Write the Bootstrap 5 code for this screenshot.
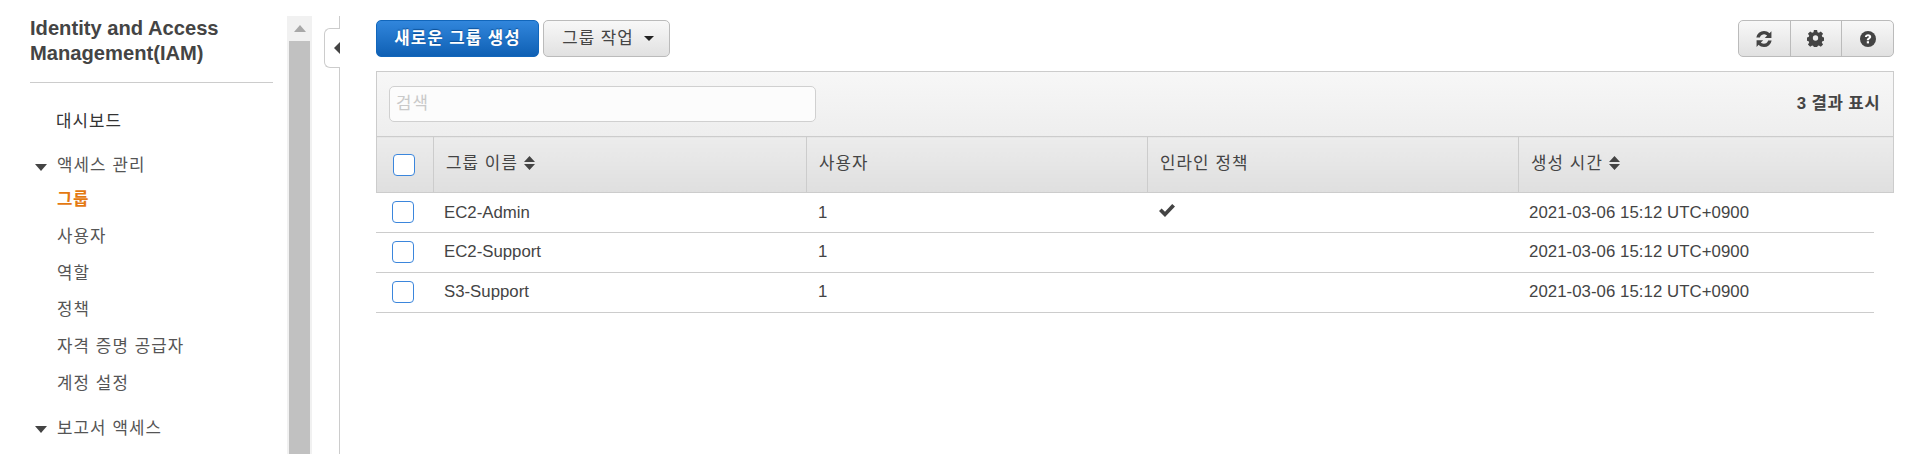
<!DOCTYPE html>
<html lang="ko">
<head>
<meta charset="UTF-8">
<meta name="viewport" content="width=device-width, initial-scale=1">
<title>IAM - 그룹</title>
<link href="https://cdn.jsdelivr.net/npm/bootstrap@5.3.2/dist/css/bootstrap.min.css" rel="stylesheet">
<style>
  html, body {
    height: 100%;
    overflow: hidden;
  }
  body {
    background: #fff;
    color: #444;
    font-family: "Liberation Sans", "Noto Sans CJK KR", sans-serif;
    font-size: 16.8px;
  }
  .iam-shell { height: 454px; }

  /* Sidebar */
  .iam-side {
    width: 287px;
    flex: none;
    padding: 16px 14px 0 30px;
  }
  .iam-title {
    font-size: 20.16px;
    font-weight: 700;
    line-height: 25px;
    margin: 0;
    padding-bottom: 16px;
    border-bottom: 1px solid #ccc;
    color: #444;
  }
  .side-link {
    display: block;
    height: 36.7px;
    line-height: 36.7px;
    padding-left: 27px;
    color: #555;
    text-decoration: none;
    white-space: nowrap;
    letter-spacing: 1.1px;
  }
  .side-link.is-dash { color: #333; margin-top: 21px; padding-left: 26px; }
  .side-link.is-active { color: #e47911; font-weight: 700; letter-spacing: .6px; margin-top: 1px; }
  .side-head {
    display: flex;
    align-items: center;
    height: 36.7px;
    color: #555;
    white-space: nowrap;
    letter-spacing: 1.1px;
    margin-top: 7px;
    margin-bottom: -3px;
  }
  .side-head.is-second { margin-top: 8px; }
  .side-head svg { margin: 2px 10px 0 5px; flex: none; }

  /* Fake scrollbar */
  .iam-scroll {
    width: 25px;
    flex: none;
    margin-top: 16px;
    background: #f1f1f1;
    display: flex;
    flex-direction: column;
    align-items: center;
  }
  .iam-scroll-btn { height: 25px; display: flex; align-items: center; justify-content: center; }
  .iam-scroll-thumb { width: 21px; flex: 1; background: #c1c1c1; }

  .iam-gutter { width: 27px; flex: none; }

  /* Main */
  .iam-main {
    flex: 1;
    min-width: 0;
    margin-top: 16px;
    border-left: 1px solid #ccc;
    padding: 4px 19px 0 36px;
    position: relative;
  }
  .iam-collapse {
    position: absolute;
    left: -16px;
    top: 12px;
    width: 16px;
    height: 40px;
    background: #fff;
    border: 1px solid #ccc;
    border-right: 0;
    border-radius: 6px 0 0 6px;
    display: flex;
    align-items: center;
    justify-content: flex-end;
  }
  .iam-toolbar { height: 37px; margin-bottom: 14px; }
  .iam-btn {
    height: 37px;
    padding: 0 18px;
    font-size: 16.8px;
    line-height: 35px;
    border-radius: 5px;
    letter-spacing: 1px;
    white-space: nowrap;
    color: #444;
    border: 1px solid #bbb;
    background: linear-gradient(#f8f8f8, #e1e1e1);
  }
  .iam-btn-main {
    width: 163px;
    color: #fff;
    font-weight: 700;
    letter-spacing: 1px;
    padding: 0;
    border-color: #1166bb;
    background: linear-gradient(#3186dc, #0f60b4);
    text-shadow: 0 -1px 1px #0b4f96;
  }
  .iam-btn-menu { width: 127px; padding: 0 0 0 3px; }
  .iam-btn-menu::after { margin-left: 10px; color: #222; vertical-align: 3px; }
  .iam-btn-icon { width: 52.7px; padding: 0; display: flex; align-items: center; justify-content: center; }

  .iam-filter {
    height: 65px;
    border: 1px solid #ccc;
    border-bottom: 0;
    background: linear-gradient(#f7f7f7, #eeeeee);
    padding: 0 12px;
  }
  .iam-search {
    width: 427px;
    height: 36px;
    padding: 0 6px;
    font-size: 16.8px;
    letter-spacing: 1px;
    border: 1px solid #d0d0d0;
    border-radius: 5px;
    background: #fcfcfc;
    color: #444;
  }
  .iam-search::placeholder { color: #c9c9c9; }
  .iam-count { letter-spacing: .4px; font-weight: 700; color: #444; margin-right: 1px; }

  /* Tables */
  .iam-table {
    table-layout: fixed;
    margin: 0;
    font-size: 16.8px;
    color: #444;
  }
  .iam-table-head { width: 1518px; }
  .iam-table-head th {
    height: 56px;
    padding: 0 12px 2px;
    font-weight: 400;
    letter-spacing: 1.1px;
    vertical-align: middle;
    background: linear-gradient(#ececec, #dfdfdf);
    border: 1px solid #ccc;
    border-width: 1px 1px 1px 0;
    color: #444;
    box-shadow: none;
  }
  .iam-table-head th:first-child { border-left-width: 1px; padding: 0 0 0 16px; }
  .iam-table-body { width: 1498px; }
  .iam-table-body td {
    height: 40px;
    padding: 0 10px 0 12px;
    vertical-align: middle;
    border: 0;
    border-bottom: 1px solid #ccc;
    background: #fff;
    color: #444;
    box-shadow: none;
  }
  .iam-table-body td:first-child { padding: 0 0 0 16px; }
  .iam-table-body tr:first-child td { height: 39px; }
  .iam-table-body td:nth-child(2) { padding-left: 11px; }
  .iam-table-body td:nth-child(5) { padding-left: 11px; letter-spacing: .05px; }
  .iam-check {
    display: block;
    width: 22px;
    height: 22px;
    margin: 0;
    appearance: none;
    background: #fff;
    border: 1px solid #3b86dc;
    border-radius: 4px;
  }
  .iam-table-body td svg { display: block; margin-top: -3px; }
  .iam-sort { margin-left: 6px; vertical-align: -1px; }
</style>
</head>
<body>

<div class="iam-shell d-flex">
  <aside class="iam-side">
    <h1 class="iam-title">Identity and Access Management(IAM)</h1>
    <nav class="d-flex flex-column">
      <a class="side-link is-dash" href="#">대시보드</a>
      <div class="side-head">
        <svg width="12" height="7" viewBox="0 0 12 7"><path d="M0 0h12L6 7z" fill="#444"/></svg>
        <span>액세스 관리</span>
      </div>
      <a class="side-link is-active" href="#">그룹</a>
      <a class="side-link" href="#">사용자</a>
      <a class="side-link" href="#">역할</a>
      <a class="side-link" href="#">정책</a>
      <a class="side-link" href="#">자격 증명 공급자</a>
      <a class="side-link" href="#">계정 설정</a>
      <div class="side-head is-second">
        <svg width="12" height="7" viewBox="0 0 12 7"><path d="M0 0h12L6 7z" fill="#444"/></svg>
        <span>보고서 액세스</span>
      </div>
    </nav>
  </aside>

  <div class="iam-scroll">
    <div class="iam-scroll-btn">
      <svg width="12" height="7" viewBox="0 0 12 7"><path d="M0 7h12L6 0z" fill="#a8a8a8"/></svg>
    </div>
    <div class="iam-scroll-thumb"></div>
  </div>

  <div class="iam-gutter"></div>

  <main class="iam-main">
    <div class="iam-collapse">
      <svg width="6" height="12" viewBox="0 0 6 12"><path d="M6 0v12L0 6z" fill="#444"/></svg>
    </div>

    <div class="iam-toolbar d-flex align-items-center gap-1">
      <button type="button" class="btn iam-btn iam-btn-main">새로운 그룹 생성</button>
      <button type="button" class="btn iam-btn iam-btn-menu dropdown-toggle">그룹 작업</button>
      <div class="btn-group ms-auto">
        <button type="button" class="btn iam-btn iam-btn-icon" aria-label="새로 고침">
          <svg width="18" height="18" viewBox="0 0 16 16" fill="#444">
            <path d="M8 .8c1.900 0 3.600.8 4.800 2L14.600 1v6H8.700l2.100-2.100A3.900 3.900 0 0 0 4.300 6.700H1.200A7 7 0 0 1 8 .8z"/>
            <path d="M8 15.200c-1.900 0-3.600-.8-4.800-2L1.400 15V9h5.900l-2.100 2.100a3.900 3.900 0 0 0 6.500-1.800h3.100A7 7 0 0 1 8 15.200z"/>
          </svg>
        </button>
        <button type="button" class="btn iam-btn iam-btn-icon" aria-label="설정">
          <svg width="17" height="17" viewBox="0 0 16 16" fill="#444">
            <path fill-rule="evenodd" d="M6.500.5h3l.4 2.100 1.300.6 1.800-1.200 2.100 2.100-1.200 1.800.6 1.300 2 .4v3l-2 .4-.6 1.300 1.200 1.800-2.100 2.100-1.800-1.200-1.300.6-.4 2h-3l-.4-2-1.300-.6-1.800 1.200-2.100-2.100 1.200-1.800-.6-1.300-2-.4v-3l2-.4.6-1.300-1.200-1.800 2.100-2.100 1.800 1.200 1.300-.6zM8 5.500a2.500 2.500 0 1 0 0 5 2.500 2.500 0 0 0 0-5z" transform="translate(0 -.5)"/>
          </svg>
        </button>
        <button type="button" class="btn iam-btn iam-btn-icon" aria-label="도움말">
          <svg width="16" height="16" viewBox="0 0 16 16">
            <circle cx="8" cy="8" r="8" fill="#444"/>
            <path d="M4.900 6.100C5 4.300 6.300 3.300 8.100 3.300c1.800 0 3.100 1 3.100 2.500 0 1.100-.6 1.700-1.400 2.200-.6.400-.8.700-.8 1.300H6.800c0-1.100.3-1.700 1.100-2.200.6-.4.900-.7.900-1.200 0-.5-.3-.8-.8-.8-.6 0-.9.400-1 1z" fill="#fff"/>
            <rect x="6.800" y="10.200" width="2.200" height="2.200" fill="#fff"/>
          </svg>
        </button>
      </div>
    </div>

    <div class="iam-filter d-flex align-items-center justify-content-between">
      <input type="text" class="form-control iam-search" placeholder="검색">
      <span class="iam-count">3 결과 표시</span>
    </div>

    <table class="table iam-table iam-table-head">
      <colgroup>
        <col style="width:57px"><col style="width:373px"><col style="width:341px"><col style="width:371px"><col>
      </colgroup>
      <thead>
        <tr>
          <th><input type="checkbox" class="iam-check" aria-label="전체 선택"></th>
          <th>그룹 이름<svg class="iam-sort" width="11" height="14" viewBox="0 0 11 14"><path d="M5.500 0L11 6H0zM0 8h11l-5.500 6z" fill="#444"/></svg></th>
          <th>사용자</th>
          <th>인라인 정책</th>
          <th>생성 시간<svg class="iam-sort" width="11" height="14" viewBox="0 0 11 14"><path d="M5.500 0L11 6H0zM0 8h11l-5.500 6z" fill="#444"/></svg></th>
        </tr>
      </thead>
    </table>
    <table class="table iam-table iam-table-body">
      <colgroup>
        <col style="width:57px"><col style="width:373px"><col style="width:341px"><col style="width:371px"><col>
      </colgroup>
      <tbody>
        <tr>
          <td><input type="checkbox" class="iam-check" aria-label="EC2-Admin 선택"></td>
          <td>EC2-Admin</td>
          <td>1</td>
          <td><svg width="16" height="13" viewBox="0 0 16 13"><path d="M0 7l2.600-2.600L6 7.700 13.200 0 16 2.600 6 13z" fill="#444"/></svg></td>
          <td>2021-03-06 15:12 UTC+0900</td>
        </tr>
        <tr>
          <td><input type="checkbox" class="iam-check" aria-label="EC2-Support 선택"></td>
          <td>EC2-Support</td>
          <td>1</td>
          <td></td>
          <td>2021-03-06 15:12 UTC+0900</td>
        </tr>
        <tr>
          <td><input type="checkbox" class="iam-check" aria-label="S3-Support 선택"></td>
          <td>S3-Support</td>
          <td>1</td>
          <td></td>
          <td>2021-03-06 15:12 UTC+0900</td>
        </tr>
      </tbody>
    </table>
  </main>
</div>

<script src="https://cdn.jsdelivr.net/npm/bootstrap@5.3.2/dist/js/bootstrap.bundle.min.js"></script>
</body>
</html>
